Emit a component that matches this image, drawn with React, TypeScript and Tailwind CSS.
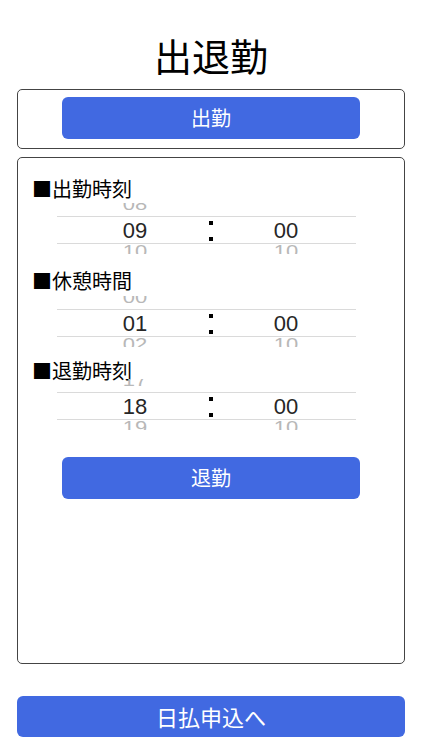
const jp = { fontFamily: '"Noto Sans CJK JP", "Noto Sans", sans-serif' };
const num = { fontFamily: '"Liberation Sans", "Noto Sans", sans-serif' };

function Wheel({ prev, value, next, min, minNext }: { prev: string; value: string; next: string; min: string; minNext: string }) {
  return (
    <div className="ml-[39px] w-[299px]" style={num}>
      {/* 上の値（見切れ） */}
      <div className="flex h-[13px] items-end overflow-hidden text-[#b8b8b8]">
        <div className="w-[156px] text-center">
          <span className="mb-[-2px] inline-block origin-bottom scale-y-[0.75] text-[22px] leading-[20px]">{prev}</span>
        </div>
        <div className="flex-1" />
      </div>
      {/* 選択中 */}
      <div className="flex h-[28px] items-center border-y border-[#dadada] text-[22px] text-[#262626]">
        <div className="w-[156px] text-center">{value}</div>
        <div className="relative h-full w-0">
          <div className="absolute left-[-4px] top-[4px] h-[4px] w-[4px] bg-black" />
          <div className="absolute left-[-4px] top-[20px] h-[4px] w-[4px] bg-black" />
        </div>
        <div className="flex-1 pl-[3px] text-center">{min}</div>
      </div>
      {/* 下の値（見切れ） */}
      <div className="flex h-[10px] items-start overflow-hidden text-[#b8b8b8]">
        <div className="w-[156px] text-center">
          <span className="mt-[-1px] inline-block origin-top scale-y-[0.75] text-[22px] leading-[20px]">{next}</span>
        </div>
        <div className="flex-1 pl-[3px] text-center">
          <span className="mt-[-1px] inline-block origin-top scale-y-[0.75] text-[22px] leading-[20px]">{minNext}</span>
        </div>
      </div>
    </div>
  );
}

function Label({ text, className }: { text: string; className?: string }) {
  return (
    <div className={`h-[24px] pl-[14px] text-[20px] leading-[24px] text-black ${className ?? ""}`} style={jp}>
      ■{text}
    </div>
  );
}

export default function App() {
  return (
    <div className="min-h-[750px] w-[422px] bg-white" style={jp}>
      <div className="pt-[30px] text-center text-[38px] leading-[50px] text-black">出退勤</div>

      {/* 出勤 */}
      <div className="mx-[17px] mt-[9px] h-[60px] rounded-[5px] border border-[#444]">
        <div className="flex justify-center pt-[7px]">
          <button className="h-[42px] w-[298px] rounded-[6px] bg-[#4169e1] text-[20px] text-white">出勤</button>
        </div>
      </div>

      {/* 時刻入力 */}
      <div className="mx-[17px] mt-[8px] h-[507px] rounded-[5px] border border-[#444] pt-[19px]">
        <Label text="出勤時刻" />
        <div className="mt-[2px]">
          <Wheel prev="08" value="09" next="10" min="00" minNext="10" />
        </div>
        <Label text="休憩時間" className="mt-[15px]" />
        <div className="mt-[3px]">
          <Wheel prev="00" value="01" next="02" min="00" minNext="10" />
        </div>
        <Label text="退勤時刻" className="mt-[12px]" />
        <div className="-mt-[4px]">
          <Wheel prev="17" value="18" next="19" min="00" minNext="10" />
        </div>
        <div className="mt-[27px] flex justify-center">
          <button className="h-[42px] w-[298px] rounded-[6px] bg-[#4169e1] text-[20px] text-white">退勤</button>
        </div>
      </div>

      <div className="mx-[17px] mt-[32px]">
        <button className="h-[41px] w-full rounded-[6px] bg-[#4169e1] text-[22px] text-white">日払申込へ</button>
      </div>
    </div>
  );
}
